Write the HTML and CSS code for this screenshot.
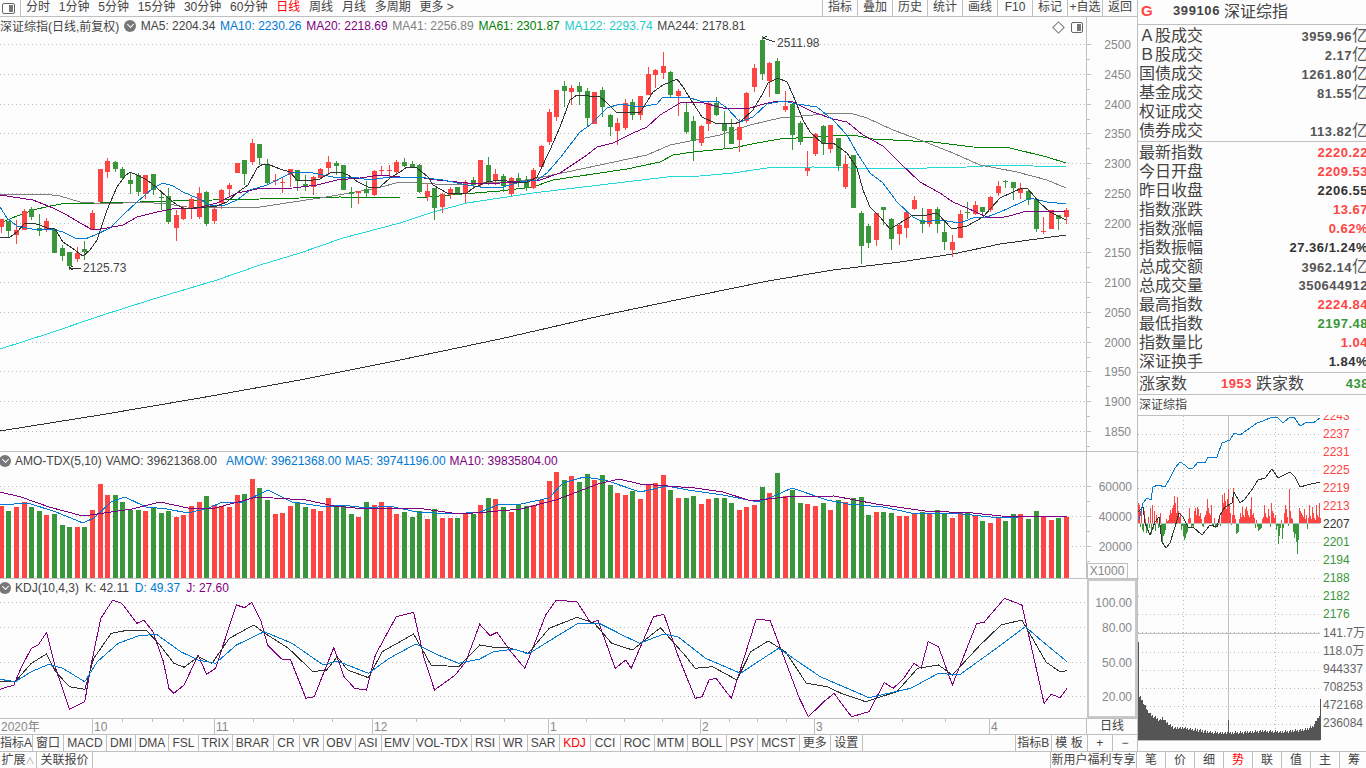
FILE: index.html
```html
<!DOCTYPE html>
<html lang="zh-CN">
<head>
    <meta charset="UTF-8">
    <title>深证综指 日线</title>
    <link rel="stylesheet" href="styles.css">
</head>
<body>

<div class="app">
    <div class="workspace">

        <!-- Left side: kline, volume and KDJ panes -->
        <div class="chart-col">
            <div class="toolbar">
                <span class="panel-icon toolbar-icon"><i></i></span>
                <div class="periods">
                    <span>分时</span><span>1分钟</span><span>5分钟</span><span>15分钟</span><span>30分钟</span><span>60分钟</span>
                    <span class="active">日线</span><span>周线</span><span>月线</span><span>多周期</span><span>更多 &gt;</span>
                </div>
                <div class="tools">
                    <span>指标</span><span>叠加</span><span>历史</span><span>统计</span><span>画线</span><span>F10</span><span>标记</span><span>+自选</span><span>返回</span>
                </div>
            </div>

            <div class="pane main-pane">
                <svg id="mainChart" width="1137" height="434" viewBox="0 17 1137 434"></svg>
                <div class="legend">
                    <span class="legend-title">深证综指(日线,前复权)</span>
                    <span class="drop-icon"></span>
                    <span class="c-dark">MA5: 2204.34</span>
                    <span class="c-blue">MA10: 2230.26</span>
                    <span class="c-purple">MA20: 2218.69</span>
                    <span class="c-grey">MA41: 2256.89</span>
                    <span class="c-green">MA61: 2301.87</span>
                    <span class="c-cyan">MA122: 2293.74</span>
                    <span class="c-dark">MA244: 2178.81</span>
                </div>
                <span class="diamond-icon"></span>
                <span class="panel-icon pane-icon"><i></i></span>
            </div>

            <div class="pane vol-pane">
                <svg id="volChart" width="1137" height="126" viewBox="0 452 1137 126"></svg>
                <div class="legend legend-sub legend-vol">
                    <span class="drop-icon"></span>
                    <span class="c-dark">AMO-TDX(5,10)</span>
                    <span class="c-dark">VAMO: 39621368.00</span>
                    <span class="c-blue gap-left">AMOW: 39621368.00</span>
                    <span class="c-blue">MA5: 39741196.00</span>
                    <span class="c-purple">MA10: 39835804.00</span>
                </div>
            </div>

            <div class="pane kdj-pane">
                <svg id="kdjChart" width="1137" height="139" viewBox="0 579 1137 139"></svg>
                <div class="legend legend-sub">
                    <span class="drop-icon"></span>
                    <span class="c-dark">KDJ(10,4,3)</span>
                    <span class="c-dark">K: 42.11</span>
                    <span class="c-blue">D: 49.37</span>
                    <span class="c-purple">J: 27.60</span>
                </div>
            </div>

            <div class="date-row">
                <svg id="dateAxis" width="1087" height="15" viewBox="0 719 1087 15"></svg>
                <div class="date-unit">日线</div>
            </div>

            <div class="tabs">
                <span>指标A</span><span>窗口</span><span>MACD</span><span>DMI</span><span>DMA</span><span>FSL</span><span>TRIX</span><span>BRAR</span><span>CR</span><span>VR</span><span>OBV</span><span>ASI</span><span>EMV</span><span>VOL-TDX</span><span>RSI</span><span>WR</span><span>SAR</span><span class="active">KDJ</span><span>CCI</span><span>ROC</span><span>MTM</span><span>BOLL</span><span>PSY</span><span>MCST</span><span>更多</span><span>设置</span><span class="tabs-space"></span><span>指标B</span><span>模 板</span><span>+</span><span>−</span>
            </div>
        </div>

        <!-- Right side: quote table and small intraday chart -->
        <div class="info-col">
            <div class="quote-head">
                <span class="quote-flag">G</span>
                <span class="quote-code">399106</span>
                <span class="quote-name">深证综指</span>
            </div>

            <div class="quote-block">
                <div class="row"><span>Ａ股成交</span><b class="v-grey">3959.96<em>亿</em></b></div>
                <div class="row"><span>Ｂ股成交</span><b class="v-grey">2.17<em>亿</em></b></div>
                <div class="row"><span>国债成交</span><b class="v-grey">1261.80<em>亿</em></b></div>
                <div class="row"><span>基金成交</span><b class="v-grey">81.55<em>亿</em></b></div>
                <div class="row"><span>权证成交</span><b></b></div>
                <div class="row"><span>债券成交</span><b class="v-grey">113.82<em>亿</em></b></div>
            </div>

            <div class="quote-block">
                <div class="row"><span>最新指数</span><b class="v-red">2220.22</b></div>
                <div class="row"><span>今日开盘</span><b class="v-red">2209.53</b></div>
                <div class="row"><span>昨日收盘</span><b class="v-dark">2206.55</b></div>
                <div class="row"><span>指数涨跌</span><b class="v-red">13.67</b></div>
                <div class="row"><span>指数涨幅</span><b class="v-red">0.62%</b></div>
                <div class="row"><span>指数振幅</span><b class="v-dark">27.36/1.24%</b></div>
                <div class="row"><span>总成交额</span><b class="v-grey">3962.14<em>亿</em></b></div>
                <div class="row"><span>总成交量</span><b class="v-grey">350644912</b></div>
                <div class="row"><span>最高指数</span><b class="v-red">2224.84</b></div>
                <div class="row"><span>最低指数</span><b class="v-green">2197.48</b></div>
                <div class="row"><span>指数量比</span><b class="v-red">1.04</b></div>
                <div class="row"><span>深证换手</span><b class="v-dark">1.84%</b></div>
            </div>

            <div class="breadth">
                <span>涨家数</span><b class="v-red">1953</b>
                <span class="breadth-down">跌家数</span><b class="v-green">438</b>
            </div>

            <div class="mini-title">深证综指</div>
            <svg id="miniChart" width="228" height="336" viewBox="1138 415 228 336"></svg>
        </div>
    </div>

    <div class="statusbar">
        <span class="st-expand">扩展<i>∧</i></span>
        <span class="st-link">关联报价</span>
        <span class="st-space"></span>
        <span class="st-promo">新用户福利专享</span>
        <span class="st-tab">笔</span><span class="st-tab">价</span><span class="st-tab">细</span><span class="st-tab active">势</span><span class="st-tab">联</span><span class="st-tab">值</span><span class="st-tab">主</span><span class="st-tab">筹</span>
    </div>
</div>

<script src="chart.js"></script>
</body>
</html>
```

FILE: styles.css
```css
/* General Styling */
html, body {
    margin: 0;
    padding: 0;
}

body {
    width: 1366px;
    height: 768px;
    overflow: hidden;
    background: #fdfdfd;
    color: #444;
    font-family: "Liberation Sans", "Noto Sans CJK SC", sans-serif;
    font-size: 12px;
}

.app {
    display: flex;
    flex-direction: column;
    height: 768px;
}

.workspace {
    display: flex;
    height: 751px;
}

.chart-col {
    width: 1137px;
    flex: none;
    border-right: 1px solid #c0c0c0;
    display: flex;
    flex-direction: column;
}

.info-col {
    width: 228px;
    flex: none;
    overflow: hidden;
}

/* Top toolbar */
.toolbar {
    height: 16px;
    line-height: 15px;
    border-bottom: 1px solid #c0c0c0;
    display: flex;
    align-items: stretch;
}

.toolbar-icon {
    margin: 3px 0 0 2px;
}

.periods {
    margin-left: 5px;
    padding-left: 5px;
    border-left: 1px solid #c0c0c0;
    display: flex;
    gap: 8.8px;
    white-space: nowrap;
}

.periods .active, .tabs .active, .st-tab.active {
    color: #f00;
}

.tools {
    margin-left: auto;
    display: flex;
}

.tools span {
    width: 34px;
    text-align: center;
    border-left: 1px solid #c0c0c0;
    white-space: nowrap;
}

/* Chart panes */
.pane {
    position: relative;
    border-bottom: 1px solid #c0c0c0;
}

.pane svg, .date-row svg, #miniChart {
    display: block;
}

.legend {
    position: absolute;
    top: 0;
    left: 0;
    display: flex;
    align-items: center;
    gap: 4.7px;
    height: 17px;
    white-space: nowrap;
}

.legend-sub {
    left: -1px;
    gap: 6px;
}

.legend-vol {
    gap: 4px;
}

.legend-sub .drop-icon {
    margin-right: -2px;
}

.legend-vol .drop-icon {
    margin-right: 0;
}

.gap-left {
    margin-left: 5px;
}

.drop-icon {
    width: 12px;
    height: 12px;
    flex: none;
    border-radius: 50%;
    background: #777;
    position: relative;
}

.drop-icon::after {
    content: "";
    position: absolute;
    left: 3.5px;
    top: 2.5px;
    width: 4px;
    height: 4px;
    border-right: 1px solid #fff;
    border-bottom: 1px solid #fff;
    transform: rotate(45deg);
}

.panel-icon {
    width: 13px;
    height: 11px;
    border: 1px solid #666;
    border-radius: 2px;
    box-sizing: border-box;
    display: block;
    position: relative;
    flex: none;
    background: #fff;
}

.panel-icon i {
    position: absolute;
    right: 1px;
    top: 1px;
    bottom: 1px;
    width: 4px;
    background: #777;
}

.pane-icon {
    position: absolute;
    left: 1071px;
    top: 5px;
    width: 12px;
}

.diamond-icon {
    position: absolute;
    left: 1054px;
    top: 6px;
    width: 7px;
    height: 7px;
    border: 1px solid #777;
    transform: rotate(45deg);
}

.c-dark { color: #444; }
.c-blue { color: #0078d4; }
.c-purple { color: #800080; }
.c-grey { color: #808080; }
.c-green { color: #007f00; }
.c-cyan { color: #22cccc; }

/* Date axis */
.date-row {
    display: flex;
    height: 15px;
    border-bottom: 1px solid #c0c0c0;
}

.date-unit {
    width: 50px;
    line-height: 15px;
    text-align: center;
}

/* Indicator tabs */
.tabs {
    height: 16px;
    line-height: 16px;
    display: grid;
    grid-template-columns: 33px 31px 43px 29px 33px 30px 33.5px 41px 26px 24px 32px 26px 32px 58px 28px 28px 32px 31px 30px 34px 33px 39.5px 31px 41.5px 31.5px 31.5px 1fr 35.5px 36px 25.5px 24px;
}

.tabs span {
    text-align: center;
    border-right: 1px solid #c0c0c0;
    white-space: nowrap;
}

.tabs span:last-child {
    border-right: none;
}

/* Quote table */
.quote-head {
    height: 20px;
    padding: 0 0 4px 3px;
    display: flex;
    align-items: center;
    border-bottom: 1px solid #c0c0c0;
}

.quote-flag {
    width: 32px;
    color: #ff4444;
    font-size: 15px;
    font-weight: bold;
}

.quote-code {
    font-size: 13px;
    font-weight: bold;
    letter-spacing: 0.6px;
    margin-right: 4px;
}

.quote-name {
    font-size: 16px;
}

.quote-block {
    padding: 1px 0;
    border-bottom: 1px solid #c0c0c0;
}

.row {
    display: flex;
    justify-content: space-between;
    height: 19px;
    line-height: 19px;
    margin-right: -2px;
    padding-left: 1px;
    font-size: 16px;
    white-space: nowrap;
}

.row b, .breadth b {
    font-size: 13px;
    letter-spacing: 0.5px;
}

.row em {
    font-style: normal;
    font-weight: normal;
    font-size: 16px;
    letter-spacing: 0;
}

.v-red { color: #ff4444; }
.v-green { color: #3a963a; }
.v-dark { color: #333; }
.v-grey { color: #555; }

.breadth {
    height: 21px;
    line-height: 21px;
    display: flex;
    margin-right: -3px;
    padding-left: 1px;
    font-size: 16px;
    border-bottom: 1px solid #c0c0c0;
    white-space: nowrap;
}

.breadth b {
    width: 34px;
    margin-left: auto;
    text-align: right;
}

.breadth-down {
    margin-left: 4px;
}

.mini-title {
    height: 20px;
    line-height: 20px;
    padding-left: 1px;
}

/* Bottom status bar */
.statusbar {
    height: 16px;
    line-height: 17px;
    border-top: 1px solid #c0c0c0;
    display: flex;
    white-space: nowrap;
    overflow: hidden;
}

.statusbar span {
    border-right: 1px solid #c0c0c0;
    box-sizing: border-box;
    text-align: center;
    flex: none;
}

.st-expand { width: 37px; }

.st-expand i {
    font-style: normal;
    font-size: 9px;
    color: #999;
}

.st-link { width: 56px; }

.statusbar .st-space {
    width: 957px;
    border-right: none;
}

.st-promo {
    width: 87px;
    border-left: 1px solid #c0c0c0;
}

.st-tab { width: 29px; }
```

FILE: chart.js
```js
const RED = '#ff4444', GREEN = '#3a963a', BLUE = '#0078d4', PURPLE = '#800080',
      GREY = '#808080', DGREEN = '#007f00', CYAN = '#22d8d8', DARK = '#333333';

const barX = i => Math.round(0.7 + 7.61 * i);

// up, high, body top, body bottom, low (page y pixels)
const candles = [
    [1,219,219,227,233],[0,221,221,231,238],[1,220,230,235,244],[1,209,211,230,230],[0,207,209,217,220],
    [0,214,228,231,236],[1,218,221,229,232],[0,229,229,253,253],[0,245,248,256,261],[0,252,252,266,270],
    [1,247,253,259,262],[0,241,249,252,260],[1,210,213,230,230],[1,169,169,202,202],[1,158,161,172,178],
    [0,161,162,169,172],[0,167,169,178,180],[0,172,180,184,194],[0,173,175,192,196],[1,175,175,194,199],
    [0,174,174,190,195],[0,192,197,198,210],[0,188,196,222,224],[1,210,215,228,241],[1,206,208,219,220],
    [1,197,199,208,219],[1,187,193,217,219],[0,191,192,224,226],[1,206,209,221,224],[1,189,190,203,209],
    [1,183,185,189,196],[1,163,163,173,173],[0,160,160,174,185],[1,139,143,162,165],[0,144,144,158,165],
    [0,159,164,183,185],[1,174,180,181,185],[1,177,182,183,193],[1,169,169,175,187],[0,170,170,181,191],
    [0,175,184,186,191],[1,176,177,187,195],[1,168,169,178,178],[1,156,162,168,175],[0,161,163,166,175],
    [0,165,165,190,190],[0,187,192,194,208],[1,191,191,193,204],[0,181,189,193,197],[1,170,171,195,196],
    [1,166,170,171,176],[1,165,170,171,177],[1,160,162,172,174],[0,158,162,166,167],[0,161,164,167,167],
    [0,164,165,192,193],[1,183,191,197,201],[0,188,188,208,220],[1,193,194,207,213],[1,187,189,195,199],
    [0,187,187,195,195],[1,180,182,194,203],[0,177,180,185,189],[1,160,160,185,187],[0,157,165,182,185],
    [1,169,174,181,185],[0,174,176,186,192],[1,177,178,194,196],[0,173,178,182,187],[0,176,180,188,191],
    [1,168,170,188,189],[1,145,146,167,167],[1,109,112,142,145],[1,90,90,117,121],[0,81,86,91,107],
    [1,85,88,92,105],[0,82,86,92,105],[0,88,91,118,126],[1,92,92,124,124],[0,87,90,107,117],
    [0,114,115,127,136],[1,118,123,131,145],[1,99,103,128,130],[0,99,102,115,120],[1,96,96,115,120],
    [1,67,74,95,95],[1,69,70,75,88],[1,52,66,73,79],[0,71,72,95,97],[1,89,91,96,116],
    [0,103,112,132,134],[0,116,121,141,161],[1,125,126,143,146],[1,102,103,124,131],[0,97,103,115,116],
    [0,111,123,131,149],[0,119,127,144,144],[1,119,127,140,152],[1,92,93,121,123],[1,64,68,87,92],
    [0,36,40,74,80],[1,62,63,81,97],[0,58,61,94,94],[1,91,106,110,112],[0,104,104,135,150],
    [0,121,123,142,145],[1,151,168,171,176],[1,133,134,154,156],[0,125,126,144,155],[1,125,125,149,153],
    [0,138,138,166,171],[1,155,164,187,189],[0,155,155,208,208],[0,211,213,246,264],[0,224,226,243,248],
    [1,213,213,240,246],[0,207,207,210,225],[0,218,219,239,250],[1,224,225,234,245],[1,210,212,228,238],
    [1,196,200,209,210],[0,208,220,224,233],[1,209,209,224,227],[0,207,209,224,233],[0,222,232,242,250],
    [1,235,242,250,257],[1,210,214,238,238],[0,202,212,213,219],[1,201,205,214,215],[0,207,207,212,216],
    [1,196,197,210,212],[1,181,186,193,196],[0,180,181,182,188],[0,182,182,188,200],[1,183,188,193,199],
    [0,190,191,200,205],[0,199,200,229,232],[1,217,231,232,234],[1,210,210,229,229],[0,215,215,219,230],
    [1,208,210,217,224]
];

const volHeights = [72,67,71,76,71,67,63,64,53,51,51,51,68,94,83,83,76,68,68,67,71,65,67,61,63,72,76,82,73,72,71,83,84,99,90,78,64,65,72,76,71,69,67,80,71,73,64,61,76,73,76,72,64,66,61,67,59,69,60,60,60,65,64,73,80,79,71,66,73,72,73,78,97,106,98,102,96,104,98,103,93,85,83,87,79,94,95,103,88,80,80,82,74,79,80,80,75,68,71,73,91,85,105,82,88,75,74,72,75,68,78,76,80,81,63,66,66,65,62,62,64,66,64,68,65,60,65,66,63,57,55,61,57,64,64,59,67,61,58,60,61];

const ma5 = '0,238 10,237 17,232 25,223 32,223 40,225 47,228 55,229 63,242 72,248 83,256 90,250 97,240 107,210 117,187 125,176 130,172 137,175 147,180 157,188 167,197 177,205 183,208 193,208 207,207 217,206 227,202 238,192 248,185 257,168 263,164 270,165 280,169 290,172 297,180 307,181 320,179 330,173 340,172 348,175 358,182 370,188 380,187 390,178 400,172 407,167 417,168 428,177 433,185 447,193 467,193 473,188 487,182 500,180 513,182 528,182 537,177 550,150 560,127 570,100 577,95 600,97 607,103 617,113 627,112 640,113 653,92 663,85 677,79 683,87 693,103 702,117 715,123 733,124 740,122 753,110 762,95 768,83 778,78 787,82 793,95 803,120 810,132 823,144 833,143 847,153 857,168 863,190 870,207 880,217 890,229 900,223 913,215 927,215 937,213 952,229 967,226 983,217 1000,198 1022,188 1028,189 1040,203 1050,212 1066,220';
const ma10 = '0,207 7,218 17,226 27,228 37,230 50,229 63,232 75,238 85,239 95,235 110,228 123,215 137,202 153,188 163,183 173,186 183,192 197,198 210,205 223,206 237,200 250,190 267,185 283,177 293,172 313,173 333,177 353,177 370,180 383,178 400,177 417,177 443,180 467,185 487,188 503,187 520,182 537,180 547,173 560,158 570,145 580,132 590,125 607,108 620,104 640,107 657,104 663,97 687,97 700,101 717,101 727,108 740,122 753,117 767,104 783,101 797,104 817,107 833,120 847,135 857,153 870,173 883,183 897,202 913,217 923,222 940,220 960,223 973,218 987,217 1000,212 1020,203 1030,198 1047,202 1066,204';
const ma20 = '0,195 13,197 33,200 53,208 67,215 80,223 93,230 107,228 123,225 137,217 157,212 177,208 197,208 217,203 237,193 257,189 293,188 317,185 337,180 360,178 380,175 400,177 417,177 437,180 467,183 500,183 540,180 560,173 587,155 597,147 613,143 633,133 647,127 660,115 680,103 700,102 723,108 747,109 760,105 777,101 793,102 813,112 833,119 847,122 863,135 883,146 900,163 920,182 940,193 953,202 967,208 987,217 1000,218 1013,215 1023,212 1066,211';
const ma41 = '0,194 30,195 43,194 60,196 80,202 107,204 140,202 167,204 187,207 233,208 260,207 293,202 320,198 350,193 377,188 400,182 420,183 450,185 483,183 513,182 543,177 567,172 600,165 647,155 670,145 700,139 720,135 750,125 780,118 813,115 833,113 850,113 867,118 893,130 920,140 953,153 980,165 1017,172 1047,180 1066,188';
const ma61 = '0,223 17,216 33,210 50,206 67,203 100,203 140,202 173,201 213,200 260,199 300,198 340,197 400,198 417,198 450,195 500,191 533,187 553,180 600,173 627,169 660,162 673,155 693,152 733,148 757,143 780,139 813,137 853,135 873,139 933,142 973,147 1010,148 1047,157 1066,163';
const ma122 = '0,349 50,333 100,316 150,300 217,280 260,265 300,253 343,238 400,223 433,212 467,203 500,198 533,193 600,185 667,177 700,176 733,173 767,168 813,167 887,169 967,167 1000,165 1033,166 1066,167';
const ma244 = '0,431 100,415 200,398 300,380 400,360 500,339 600,316 700,295 768,281 833,270 900,262 953,254 1000,244 1066,235';

const amoMa5 = '0,505 28,503 56,512 83,523 94,518 111,502 125,497 146,507 167,509 188,513 209,508 222,502 243,502 268,490 292,502 327,507 341,505 368,508 389,506 417,512 452,514 480,512 500,504 521,504 549,498 563,483 584,477 605,480 640,492 667,486 688,490 723,495 758,502 772,497 792,488 827,500 848,504 883,507 911,513 952,513 1001,518 1036,516 1067,517';
const amoMa10 = '0,492 21,497 49,507 83,516 111,512 132,509 160,502 188,508 215,508 257,497 306,500 334,506 355,508 417,508 459,514 487,512 521,509 556,500 598,484 619,479 640,484 695,488 723,492 751,501 786,497 834,496 876,504 925,511 973,513 1001,516 1067,517';

// KDJ lines were read off a stretched crop, so they get scaled back below
const kdjJ = [0,703,20,690,30,640,45,580,55,570,67,532,80,640,100,763,122,740,130,640,145,490,162,436,175,445,197,505,207,495,220,530,235,620,243,700,250,715,265,690,285,600,297,658,310,640,340,450,352,458,362,442,375,495,385,570,405,612,418,615,440,730,452,725,480,578,495,665,510,700,527,705,540,600,570,485,595,472,610,610,625,705,655,660,670,620,690,508,705,542,715,532,735,590,755,640,785,480,800,436,830,440,850,505,860,495,885,640,900,615,908,640,940,485,955,478,975,600,1000,730,1010,725,1020,675,1030,670,1052,730,1088,492,1108,497,1150,730,1163,785,1185,740,1200,715,1210,745,1225,785,1250,770,1272,683,1285,700,1300,670,1315,625,1325,640,1335,560,1350,575,1370,690,1405,505,1415,503,1445,430,1470,450,1502,745,1512,718,1525,728,1535,700];
const kdjK = [0,680,22,680,45,625,67,597,80,650,100,695,122,703,135,610,160,535,180,527,210,525,230,570,250,625,265,637,285,605,305,625,330,550,365,510,385,540,415,580,450,650,470,645,485,605,500,645,530,668,550,590,595,537,620,630,660,635,690,570,710,577,730,577,760,595,790,520,830,487,855,505,880,565,910,585,950,518,985,600,1000,640,1025,635,1060,675,1080,590,1105,558,1130,590,1160,685,1190,695,1210,715,1245,740,1290,710,1320,640,1350,630,1370,660,1410,570,1440,510,1470,495,1505,622,1525,650,1535,647];
const kdjD = [0,673,22,680,45,650,70,628,90,640,122,680,140,620,170,565,200,542,225,538,260,590,285,615,310,625,340,570,380,530,420,565,465,630,485,618,530,655,560,610,598,567,630,600,660,625,690,612,710,590,740,582,760,597,800,545,830,507,862,505,900,545,920,565,955,537,975,545,1015,610,1065,655,1120,580,1180,665,1250,728,1310,700,1350,655,1380,660,1440,570,1475,515,1500,560,1535,620];

function kdjPoints(raw) {
    let pts = [];
    for (let i = 0; i < raw.length; i += 2) {
        pts.push((raw[i] / 1.4385).toFixed(1) + ',' + (455 + raw[i + 1] / 3).toFixed(1));
    }
    return pts.join(' ');
}

function line(points, color) {
    return `<polyline points="${points}" fill="none" stroke="${color}" stroke-width="1" shape-rendering="crispEdges"/>`;
}

function rect(x, y, w, h, color) {
    return `<rect x="${x}" y="${y}" width="${w}" height="${h}" fill="${color}" shape-rendering="crispEdges"/>`;
}

function hline(x1, x2, y, color, dotted) {
    const dash = dotted ? ' stroke-dasharray="1 3"' : '';
    return `<line x1="${x1}" x2="${x2}" y1="${y + 0.5}" y2="${y + 0.5}" stroke="${color}"${dash} shape-rendering="crispEdges"/>`;
}

function vline(x, y1, y2, color, dotted) {
    const dash = dotted ? ' stroke-dasharray="1 3"' : '';
    return `<line x1="${x + 0.5}" x2="${x + 0.5}" y1="${y1}" y2="${y2}" stroke="${color}"${dash} shape-rendering="crispEdges"/>`;
}

function label(x, y, str, color, anchor) {
    return `<text x="${x}" y="${y}" fill="${color}" text-anchor="${anchor || 'end'}" font-size="12">${str}</text>`;
}

// --- main kline pane
let main = vline(1086, 17, 451, '#c0c0c0');
for (let k = 0; k < 14; k++) {
    const y = Math.round(44 + 29.75 * k);
    main += hline(0, 1086, y, '#bbbbbb', true);
    main += hline(1087, 1091, y, '#c0c0c0');
    main += hline(1087, 1090, Math.round(y + 14.9), '#c0c0c0');
    main += label(1131, y + 5, 2500 - 50 * k, '#888888');
}
[ma122, ma244, ma61, ma41].forEach((pts, i) => {
    main += line(pts, [CYAN, DARK, DGREEN, GREY][i]);
});
candles.forEach((c, i) => {
    const x = barX(i), color = c[0] ? RED : GREEN;
    main += rect(x, c[1], 1, c[4] - c[1], color);
    main += rect(x - 2, c[2], 5, Math.max(c[3] - c[2], 1), color);
});
[ma20, ma10, ma5].forEach((pts, i) => {
    main += line(pts, [PURPLE, BLUE, DARK][i]);
});
main += line('763,38 767,36 763,38 775,42', DARK);
main += label(777, 47, '2511.98', '#444444', 'start');
main += line('73,266 69,268 73,270 69,268 81,268', DARK);
main += label(83, 272, '2125.73', '#444444', 'start');
document.getElementById('mainChart').innerHTML = main;

// --- volume pane
let vol = vline(1086, 452, 578, '#c0c0c0');
[[486, '60000'], [516, '40000'], [546, '20000']].forEach(t => {
    vol += hline(0, 1086, t[0], '#bbbbbb', true);
    vol += hline(1087, 1091, t[0], '#c0c0c0');
    vol += hline(1087, 1090, t[0] + 15, '#c0c0c0');
    vol += label(1132, t[0] + 5, t[1], '#888888');
});
volHeights.forEach((h, i) => {
    vol += rect(barX(i) - 2, 578 - h, 5, h, candles[i][0] ? RED : GREEN);
});
vol += line(amoMa5, BLUE);
vol += line(amoMa10, PURPLE);
vol += `<rect x="1087.5" y="563.5" width="40" height="15" fill="#fdfdfd" stroke="#c0c0c0" shape-rendering="crispEdges"/>`;
vol += label(1107, 575, 'X1000', '#888888', 'middle');
document.getElementById('volChart').innerHTML = vol;

// --- KDJ pane
let kdj = '';
[[602, '100.00'], [627, '80.00'], [662, '50.00'], [696, '20.00']].forEach(t => {
    kdj += hline(0, 1086, t[0], '#bbbbbb', true);
    kdj += label(1132, t[0] + 5, t[1], '#888888');
});
kdj += `<rect x="1088" y="580" width="48" height="137" fill="none" stroke="#c8c8c8" stroke-width="2" shape-rendering="crispEdges"/>`;
kdj += line(kdjPoints(kdjJ), PURPLE);
kdj += line(kdjPoints(kdjK), DARK);
kdj += line(kdjPoints(kdjD), BLUE);
document.getElementById('kdjChart').innerHTML = kdj;

// --- date axis
let dates = label(1, 731, '2020年', '#888888', 'start');
[[92, '10'], [214, '11'], [372, '12'], [548, '1'], [700, '2'], [814, '3'], [989, '4']].forEach(m => {
    dates += vline(m[0], 719, 734, '#c0c0c0');
    dates += label(m[0] + 2, 731, m[1], '#888888', 'start');
});
[122, 152, 183, 253, 293, 332, 416, 460, 504, 586, 624, 662, 729, 757, 786, 858, 902, 945].forEach(x => {
    dates += vline(x, 719, 722, '#c0c0c0');
});
dates += vline(1086, 719, 734, '#c0c0c0');
document.getElementById('dateAxis').innerHTML = dates;

// --- small intraday chart on the right
const miniBlue = '1139,520 1143,503 1147,498 1151,500 1153,487 1158,485 1165,487 1170,478 1175,468 1180,462 1185,465 1188,468 1193,468 1198,462 1205,463 1208,457 1217,457 1222,443 1230,440 1234,433 1240,435 1247,430 1257,423 1263,421 1272,417 1277,417 1283,423 1290,417 1294,417 1300,426 1307,422 1313,423 1320,418';
const miniBlack = '1138,512 1143,507 1145,523 1150,535 1155,522 1159,517 1162,542 1166,548 1170,543 1175,527 1179,513 1183,517 1188,527 1193,527 1202,535 1210,525 1217,527 1220,515 1225,507 1232,503 1234,492 1240,503 1245,499 1253,488 1258,480 1265,478 1272,469 1278,478 1290,472 1295,477 1300,487 1307,485 1320,482';
const flows = [20,18,-3,14,-6,-8,12,4,-9,-7,6,-4,15,-10,18,-5,12,-7,8,5,-4,-3,10,-14,-18,-12,-10,-6,4,2,3,8,13,10,15,18,27,20,10,26,12,6,10,-6,-2,-12,-16,-14,-10,-8,4,15,5,-3,-2,-4,12,15,8,16,14,7,10,4,-2,-3,6,8,12,24,15,10,8,18,-2,-3,5,-4,-2,-3,-1,5,-2,10,28,20,30,22,14,24,34,18,10,-1,8,35,8,4,-10,-9,-8,4,10,6,16,8,6,14,16,12,8,6,14,26,8,10,5,-4,3,-3,-7,-6,-5,-4,4,6,18,10,6,5,14,7,-3,20,12,10,5,8,-6,-2,-20,-12,-4,3,-15,-4,10,18,14,6,-2,34,12,5,4,-8,-14,-10,-18,-30,-16,15,12,10,8,6,14,4,8,-5,5,18,7,4,16,10,5,3,18,8,6,20,5];
const volProfile = [[1140,697],[1143,703],[1148,712],[1153,717],[1160,720],[1162,718],[1167,723],[1173,728],[1183,728],[1197,730],[1207,732],[1220,733],[1229,733],[1250,732],[1263,731],[1280,732],[1303,730],[1312,727],[1318,717],[1320,715]];

let mini = hline(1138, 1320, 415, '#c0c0c0');
for (let k = 1; k <= 12; k++) {
    if (k !== 6) mini += hline(1138, 1320, Math.round(415.7 + 18 * k), '#bbbbbb', true);
}
mini += hline(1138, 1320, 523, '#c0c0c0');
for (let k = 0; k < 5; k++) {
    mini += hline(1138, 1320, Math.round(651.7 + 18 * k), '#bbbbbb', true);
}
mini += vline(1183, 416, 741, '#bbbbbb', true);
mini += vline(1275, 416, 741, '#bbbbbb', true);
mini += vline(1228, 416, 741, '#c0c0c0');
mini += hline(1138, 1320, 633, '#c0c0c0');
mini += hline(1138, 1320, 740, '#c0c0c0');

flows.forEach((f, i) => {
    const x = 1138 + i;
    mini += f > 0 ? rect(x, 523 - f, 1, f, RED) : rect(x, 524, 1, -f, GREEN);
});
mini += line(miniBlack, DARK);
mini += line(miniBlue, BLUE);

// grey volume area: jagged steps along the traced outline
mini += rect(1138, 642, 1, 98, '#555555');
for (let x = 1139, p = 0; x < 1320; x++) {
    while (volProfile[p + 1] && volProfile[p + 1][0] <= x) p++;
    const a = volProfile[p], b = volProfile[p + 1] || a;
    const t = x < a[0] ? 0 : (x - a[0]) / Math.max(b[0] - a[0], 1);
    const y = Math.round(a[1] + (b[1] - a[1]) * t + (x * 13 % 5 - 2) * 0.7);
    mini += rect(x, y, 1, 740 - y, '#555555');
}
mini += rect(1228, 720, 1, 20, '#555555');
mini += rect(1320, 699, 1, 41, '#555555');

['2243', '2237', '2231', '2225', '2219', '2213', '2207', '2201', '2194', '2188', '2182', '2176'].forEach((t, i) => {
    const color = i < 6 ? RED : i === 6 ? DARK : GREEN;
    mini += label(1323, 420 + 18 * i, t, color, 'start');
});
['141.7万', '118.0万', '944337', '708253', '472168', '236084'].forEach((t, i) => {
    mini += label(1323, 637 + 18 * i, t, '#666666', 'start');
});
document.getElementById('miniChart').innerHTML = mini;
```
